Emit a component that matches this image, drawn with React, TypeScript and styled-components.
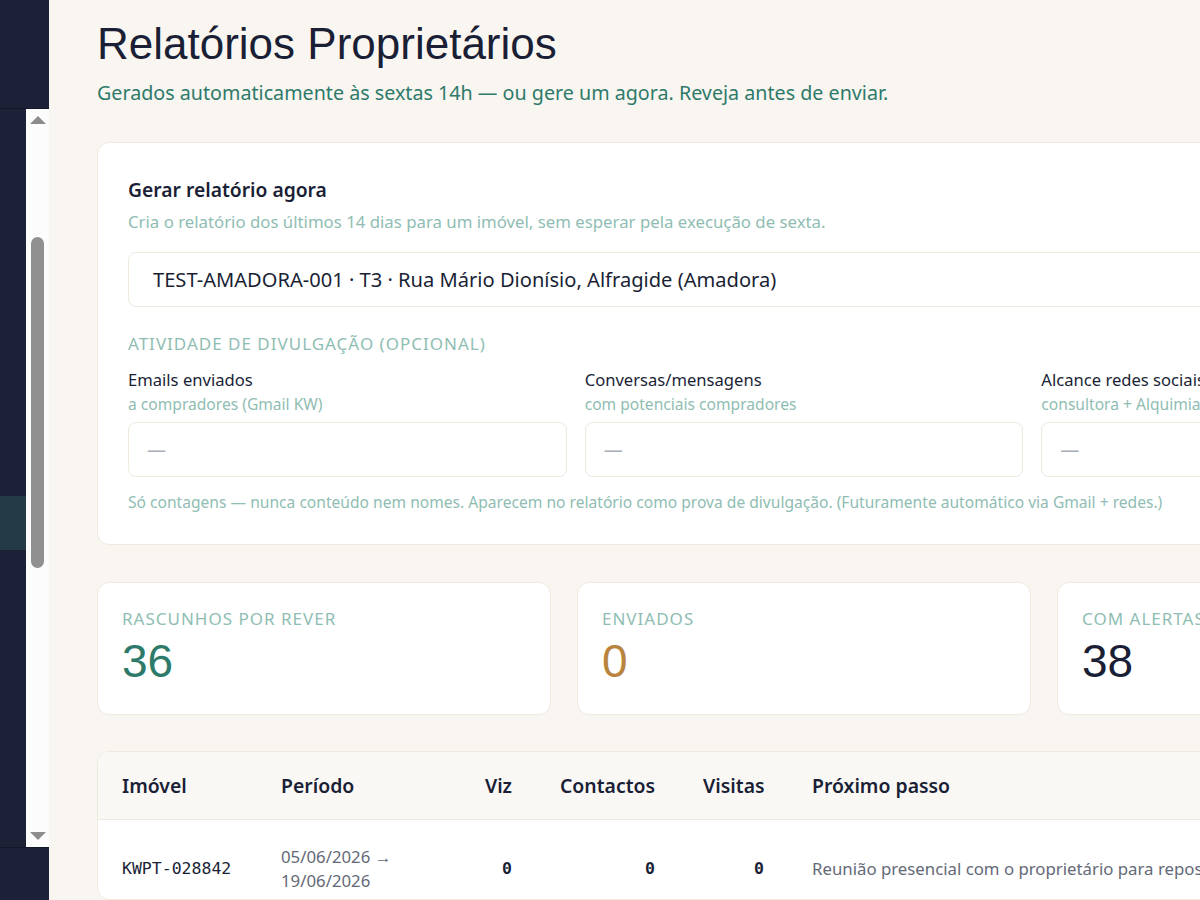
import React from 'react';
import styled, { createGlobalStyle } from 'styled-components';

const GlobalStyle = createGlobalStyle`
  html, body {
    margin: 0;
    padding: 0;
    overflow: hidden;
    background: #f9f6f1;
  }
  body {
    font-family: "Noto Sans", "Open Sans", sans-serif;
    color: #1a1f36;
  }
`;

const Shell = styled.div`
  display: flex;
  width: 1559px;
  height: 900px;
`;

const Sidebar = styled.aside`
  width: 49px;
  flex-shrink: 0;
  background: #1c2137;
  display: flex;
  flex-direction: column;
`;

const SideHead = styled.div`
  height: 108px;
  border-bottom: 1px solid #12172a;
`;

const SideScroll = styled.div`
  flex: 1;
  display: flex;
`;

const NavCol = styled.div`
  flex: 1;
  padding-top: 387px;
`;

const ActiveItem = styled.div`
  height: 54px;
  background: #243b47;
`;

const ScrollTrack = styled.div`
  width: 23px;
  background: #fcfcfc;
  display: flex;
  flex-direction: column;
  align-items: center;
  padding: 7px 0;
`;

const Arrow = styled.div<{ $down?: boolean }>`
  width: 0;
  height: 0;
  border-left: 8px solid transparent;
  border-right: 8px solid transparent;
  ${(p) => (p.$down ? 'border-top: 8px solid #8c8c8c;' : 'border-bottom: 8px solid #8c8c8c;')}
`;

const Thumb = styled.div`
  width: 13px;
  height: 331px;
  border-radius: 7px;
  background: #909090;
  margin-top: 113px;
`;

const Spacer = styled.div`
  flex: 1;
`;

const SideFoot = styled.div`
  height: 52px;
  border-top: 1px solid #12172a;
`;

const Main = styled.main`
  flex: 1;
  padding: 18px 48px 0;
  display: flex;
  flex-direction: column;
`;

const Title = styled.h1`
  margin: 0;
  font-family: "Liberation Sans", Arial, sans-serif;
  font-weight: 400;
  font-size: 44px;
  line-height: 52px;
  color: #1a1f36;
`;

const Subtitle = styled.p`
  margin: 10px 0 0;
  font-size: 19.7px;
  line-height: 26px;
  color: #2e7a6a;
`;

const Card = styled.section`
  background: #fff;
  border: 1px solid #efe9df;
  border-radius: 12px;
`;

const FormCard = styled(Card)`
  margin-top: 36px;
  padding: 34px 30px 30px;
`;

const CardTitle = styled.h2`
  margin: 0;
  font-size: 19.3px;
  font-weight: 600;
  line-height: 26px;
`;

const Description = styled.p`
  margin: 7px 0 0;
  font-size: 16.8px;
  line-height: 24px;
  color: #8fbdb3;
`;

const SelectBox = styled.div`
  margin-top: 18px;
  height: 55px;
  box-sizing: border-box;
  border: 1px solid #efe9df;
  border-radius: 8px;
  display: flex;
  align-items: center;
  padding: 0 24px;
  font-size: 20.1px;
`;

const SectionLabel = styled.div`
  margin-top: 25px;
  font-size: 17px;
  line-height: 24px;
  letter-spacing: 1px;
  text-transform: uppercase;
  color: #8fbdb3;
`;

const FieldGrid = styled.div`
  margin-top: 12px;
  display: grid;
  grid-template-columns: repeat(3, 1fr);
  gap: 18px;
`;

const Field = styled.div`
  display: flex;
  flex-direction: column;
`;

const FieldLabel = styled.div`
  font-size: 16.6px;
  line-height: 24px;
  color: #1a1f36;
`;

const FieldHint = styled.div`
  font-size: 15.6px;
  line-height: 24px;
  color: #8fbdb3;
`;

const NumberInput = styled.div`
  margin-top: 6px;
  height: 55px;
  box-sizing: border-box;
  border: 1px solid #efe9df;
  border-radius: 8px;
  display: flex;
  align-items: center;
  padding: 0 18px;
  font-size: 19px;
  color: #a9adb9;
`;

const Note = styled.p`
  margin: 13px 0 0;
  font-size: 15.6px;
  line-height: 24px;
  color: #8fbdb3;
`;

const StatRow = styled.div`
  margin-top: 37px;
  display: grid;
  grid-template-columns: repeat(3, 1fr);
  gap: 26px;
`;

const StatCard = styled(Card)`
  height: 133px;
  box-sizing: border-box;
  padding: 24px 24px;
`;

const StatLabel = styled.div`
  font-size: 17px;
  line-height: 24px;
  letter-spacing: 1px;
  text-transform: uppercase;
  color: #8fbdb3;
`;

const StatValue = styled.div<{ $tone: string }>`
  margin-top: 7px;
  font-family: "Liberation Sans", Arial, sans-serif;
  font-size: 46px;
  line-height: 46px;
  color: ${(p) => p.$tone};
`;

const TableCard = styled(Card)`
  margin-top: 36px;
  overflow: hidden;
`;

const Table = styled.table`
  width: 100%;
  border-collapse: collapse;
  table-layout: fixed;
`;

const Th = styled.th<{ $right?: boolean }>`
  background: #faf8f5;
  height: 67px;
  padding: 0 24px;
  text-align: ${(p) => (p.$right ? 'right' : 'left')};
  font-size: 19.4px;
  font-weight: 600;
  color: #1a1f36;
  border-bottom: 1px solid #efe9df;
  white-space: nowrap;
`;

const Td = styled.td<{ $right?: boolean; $mono?: boolean; $bold?: boolean }>`
  padding: 25px 24px;
  text-align: ${(p) => (p.$right ? 'right' : 'left')};
  font-family: ${(p) => (p.$mono ? '"DejaVu Sans Mono", "Liberation Mono", monospace' : 'inherit')};
  font-size: ${(p) => (p.$mono ? '16.5px' : '16.8px')};
  font-weight: ${(p) => (p.$bold ? 700 : 400)};
  color: ${(p) => (p.$mono ? '#1a1f36' : '#646977')};
  line-height: 24px;
  white-space: nowrap;
  overflow: hidden;
`;

const fields = [
  { label: 'Emails enviados', hint: 'a compradores (Gmail KW)' },
  { label: 'Conversas/mensagens', hint: 'com potenciais compradores' },
  { label: 'Alcance redes sociais', hint: 'consultora + Alquimia' },
];

const stats = [
  { label: 'Rascunhos por rever', value: '36', tone: '#2e7a6a' },
  { label: 'Enviados', value: '0', tone: '#b8843e' },
  { label: 'Com alertas', value: '38', tone: '#1a1f36' },
];

const columns = [159, 203, 76, 143, 109];

export default function App() {
  return (
    <>
      <GlobalStyle />
      <Shell>
        <Sidebar>
          <SideHead />
          <SideScroll>
            <NavCol>
              <ActiveItem />
            </NavCol>
            <ScrollTrack>
              <Arrow />
              <Thumb />
              <Spacer />
              <Arrow $down />
            </ScrollTrack>
          </SideScroll>
          <SideFoot />
        </Sidebar>
        <Main>
          <Title>Relatórios Proprietários</Title>
          <Subtitle>Gerados automaticamente às sextas 14h — ou gere um agora. Reveja antes de enviar.</Subtitle>

          <FormCard>
            <CardTitle>Gerar relatório agora</CardTitle>
            <Description>
              Cria o relatório dos últimos 14 dias para um imóvel, sem esperar pela execução de sexta.
            </Description>
            <SelectBox>TEST-AMADORA-001 · T3 · Rua Mário Dionísio, Alfragide (Amadora)</SelectBox>
            <SectionLabel>Atividade de divulgação (opcional)</SectionLabel>
            <FieldGrid>
              {fields.map((f) => (
                <Field key={f.label}>
                  <FieldLabel>{f.label}</FieldLabel>
                  <FieldHint>{f.hint}</FieldHint>
                  <NumberInput>—</NumberInput>
                </Field>
              ))}
            </FieldGrid>
            <Note>
              Só contagens — nunca conteúdo nem nomes. Aparecem no relatório como prova de divulgação. (Futuramente
              automático via Gmail + redes.)
            </Note>
          </FormCard>

          <StatRow>
            {stats.map((s) => (
              <StatCard key={s.label}>
                <StatLabel>{s.label}</StatLabel>
                <StatValue $tone={s.tone}>{s.value}</StatValue>
              </StatCard>
            ))}
          </StatRow>

          <TableCard>
            <Table>
              <colgroup>
                {columns.map((w, i) => (
                  <col key={i} style={{ width: w }} />
                ))}
                <col />
              </colgroup>
              <thead>
                <tr>
                  <Th>Imóvel</Th>
                  <Th>Período</Th>
                  <Th $right>Viz</Th>
                  <Th $right>Contactos</Th>
                  <Th $right>Visitas</Th>
                  <Th>Próximo passo</Th>
                </tr>
              </thead>
              <tbody>
                <tr>
                  <Td $mono>KWPT-028842</Td>
                  <Td>
                    05/06/2026 →
                    <br />
                    19/06/2026
                  </Td>
                  <Td $mono $bold $right>0</Td>
                  <Td $mono $bold $right>0</Td>
                  <Td $mono $bold $right>0</Td>
                  <Td>Reunião presencial com o proprietário para reposicionar o preço do imóvel.</Td>
                </tr>
              </tbody>
            </Table>
          </TableCard>
        </Main>
      </Shell>
    </>
  );
}
